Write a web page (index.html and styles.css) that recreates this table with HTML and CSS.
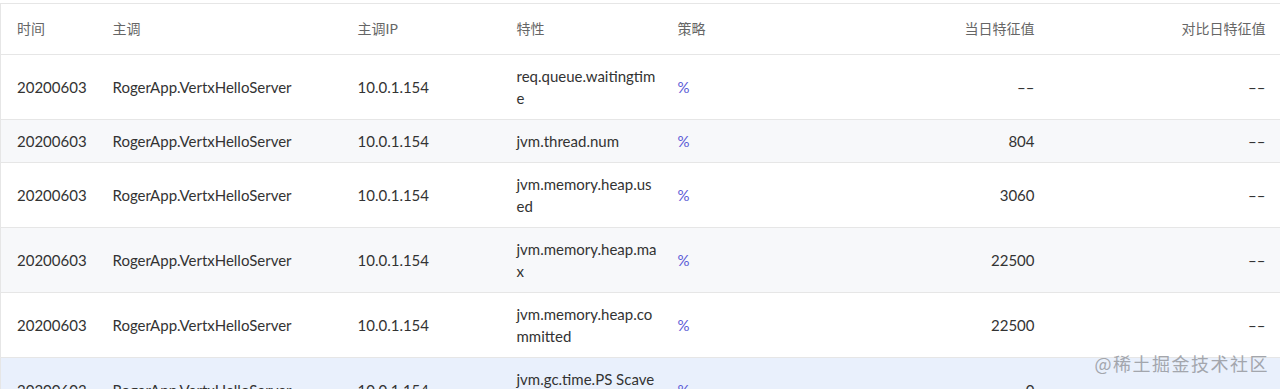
FILE: index.html
```html
<!DOCTYPE html>
<html lang="zh">
<head>
<meta charset="utf-8">
<link rel="stylesheet" href="styles.css">
</head>
<body>
<div class="wrap">
  <table class="grid">
    <colgroup>
      <col class="c-time"><col class="c-app"><col class="c-ip"><col class="c-feat"><col class="c-pol"><col class="c-cur"><col class="c-cmp">
    </colgroup>
    <thead>
      <tr><th>时间</th><th>主调</th><th>主调IP</th><th>特性</th><th>策略</th><th class="num">当日特征值</th><th class="num">对比日特征值</th></tr>
    </thead>
    <tbody>
      <tr><td>20200603</td><td>RogerApp.VertxHelloServer</td><td>10.0.1.154</td><td class="feat">req.queue.waitingtime</td><td class="pol">%</td><td class="num">––</td><td class="num">––</td></tr>
      <tr class="alt"><td>20200603</td><td>RogerApp.VertxHelloServer</td><td>10.0.1.154</td><td class="feat">jvm.thread.num</td><td class="pol">%</td><td class="num">804</td><td class="num">––</td></tr>
      <tr><td>20200603</td><td>RogerApp.VertxHelloServer</td><td>10.0.1.154</td><td class="feat">jvm.memory.heap.used</td><td class="pol">%</td><td class="num">3060</td><td class="num">––</td></tr>
      <tr class="alt"><td>20200603</td><td>RogerApp.VertxHelloServer</td><td>10.0.1.154</td><td class="feat">jvm.memory.heap.max</td><td class="pol">%</td><td class="num">22500</td><td class="num">––</td></tr>
      <tr><td>20200603</td><td>RogerApp.VertxHelloServer</td><td>10.0.1.154</td><td class="feat">jvm.memory.heap.committed</td><td class="pol">%</td><td class="num">22500</td><td class="num">––</td></tr>
      <tr class="hover"><td>20200603</td><td>RogerApp.VertxHelloServer</td><td>10.0.1.154</td><td class="feat">jvm.gc.time.PS Scavenge</td><td class="pol">%</td><td class="num">0</td><td class="num">––</td></tr>
    </tbody>
  </table>
  <div class="watermark">@稀土掘金技术社区</div>
</div>
</body>
</html>
```

FILE: styles.css
```css
html, body {
  margin: 0;
  padding: 0;
  background: #fff;
  overflow: hidden;
}
.wrap {
  position: relative;
  height: 389px;
  padding-top: 3px;
  box-sizing: border-box;
  overflow: hidden;
  font-family: Lato, "Noto Sans CJK SC", sans-serif;
}
.grid {
  width: 1281px;
  table-layout: fixed;
  border-collapse: collapse;
  border-top: 1px solid #e6e6e6;
  border-left: 1px solid #e6e6e6;
  font-size: 15px;
  line-height: 22px;
  color: #333;
}
.c-time { width: 96px; }
.c-app { width: 245px; }
.c-ip { width: 159px; }
.c-feat { width: 161px; }
.c-pol { width: 160px; }
.c-cur { width: 229px; }
.c-cmp { width: 231px; }
th {
  font-weight: normal;
  font-size: 14px;
  color: #666;
  text-align: left;
  padding: 14px 16px;
  border-bottom: 1px solid #e6e6e6;
}
td {
  padding: 10px 4px 10px 16px;
  border-bottom: 1px solid #e6e6e6;
  vertical-align: middle;
  white-space: nowrap;
}
td.feat {
  white-space: normal;
  word-break: break-all;
}
th.num, td.num { text-align: right; padding-right: 16px; }
.pol { color: #5b5bd6; }
tr.alt td { background: #f7f8fa; }
tr.hover td { background: #e9f0fc; }
.watermark {
  position: absolute;
  right: 11px;
  bottom: 15px;
  font-size: 18px;
  line-height: 22px;
  color: #a3a6ad;
  font-family: "Noto Sans CJK SC", sans-serif;
  letter-spacing: 1.5px;
}
```
